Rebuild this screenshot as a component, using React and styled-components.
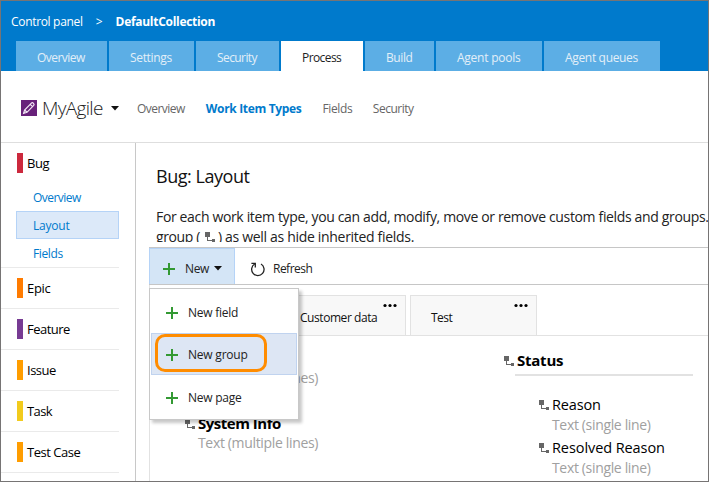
import React from "react";
import styled, { createGlobalStyle } from "styled-components";

const Global = createGlobalStyle`
  * { box-sizing: border-box; }
  body { margin: 0; background: #fff; }
`;

const Window = styled.div`
  width: 709px;
  height: 482px;
  border: 1px solid #767474;
  background: #fff;
  color: #111;
  font: 400 12px/16px "Open Sans", "Noto Sans", sans-serif;
  white-space: nowrap;
  overflow: hidden;
  display: flex;
  flex-direction: column;
`;

const Label = styled.span`
  letter-spacing: ${(p) => p.$track || 0}px;
`;

const Header = styled.header`
  flex: none;
  height: 70px;
  background: #007acc;
  display: flex;
  flex-direction: column;
  justify-content: space-between;
`;

const Breadcrumb = styled.nav`
  display: flex;
  padding: 13px 0 0 10px;
  color: #fff;
`;

const Chevron = styled.span`
  margin: 0 13px;
`;

const Collection = styled.strong`
  font-weight: 700;
  letter-spacing: -0.29px;
`;

const HubTabs = styled.div`
  display: flex;
  gap: 2px;
  padding-left: 15px;
`;

const HubTab = styled.a`
  width: ${(p) => p.$width}px;
  height: 30px;
  padding: 1px 0 0 21px;
  line-height: 32px;
  background: ${(p) => (p.$active ? "#fff" : "#5caee5")};
  color: ${(p) => (p.$active ? "#222" : "#e3eff8")};
`;

const HubRow = styled.div`
  flex: none;
  height: 72px;
  border-bottom: 1px solid #dedede;
  display: flex;
  align-items: center;
  padding: 3px 0 0 20px;
  color: #606060;
`;

const ProcessName = styled.div`
  display: flex;
  align-items: center;
  width: 116px;
  color: #222;
  font-size: 19px;
  font-weight: 300;
  line-height: 24px;

  > span { margin-left: 5px; width: 69px; }
`;

const HubLink = styled.a`
  margin-right: ${(p) => p.$gap}px;
  letter-spacing: ${(p) => p.$track}px;
  color: ${(p) => (p.$active ? "#007acc" : "#666")};
  font-weight: ${(p) => (p.$active ? 700 : 400)};
  padding-top: 1px;
`;

const Body = styled.div`
  flex: 1;
  min-height: 0;
  display: flex;
`;

const Sidebar = styled.aside`
  flex: none;
  width: 135px;
  border-right: 1px solid #c8c8c8;
  padding-right: 16px;
`;

const TypeGroup = styled.section`
  border-bottom: 1px solid #eaeaea;
`;

const TypeRow = styled.div`
  height: 40px;
  display: flex;
  align-items: center;
  padding-left: 16px;
  font-size: 13px;
  color: #000;

  &::before {
    content: "";
    width: 6px;
    height: 20px;
    margin-right: 4px;
    background: ${(p) => p.$color};
  }
`;

const SubItem = styled.a`
  display: block;
  height: 28px;
  margin-left: 15px;
  padding-left: 16px;
  line-height: 27px;
  color: #007acc;
  border: 1px solid ${(p) => (p.$active ? "#b5d3f7" : "transparent")};
  background: ${(p) => (p.$active ? "#dce9f9" : "transparent")};
`;

const Main = styled.main`
  flex: 1;
  min-width: 0;
  display: flex;
  flex-direction: column;
  padding-left: 13px;
  overflow: hidden;
`;

const Title = styled.h1`
  margin: 21px 0 0 7px;
  font-size: 18px;
  font-weight: 400;
  line-height: 24px;
  letter-spacing: -0.46px;
`;

const Description = styled.p`
  margin: 19px 0 5px 7px;
  height: 35px;
  flex: none;
  height: 35px;
  overflow: hidden;
  font-size: 14px;
  line-height: 20px;
  color: #222;

  svg { margin: 0 3px 0 5px; vertical-align: 0; }
`;

const Toolbar = styled.div`
  position: relative;
  flex: none;
  height: 38px;
  border: solid #c6c6c6;
  border-width: 1px 0;
  display: flex;
`;

const NewButton = styled.button`
  width: 86px;
  height: 36px;
  padding: 4px 0 0 13px;
  border: 1px solid #b5d3f7;
  border-bottom: 0;
  background: #d4e5f6;
  color: #222;
  font: inherit;
  display: flex;
  align-items: center;

  span { margin: 0 5px 0 10px; }
`;

const RefreshButton = styled(NewButton)`
  width: 90px;
  padding: 5px 0 0 14px;
  border-color: transparent;
  background: none;

  span { margin-left: 7px; }
`;

const Menu = styled.div`
  position: absolute;
  z-index: 2;
  top: 40px;
  left: 0;
  width: 150px;
  height: 132px;
  padding: 1px;
  border: 1px solid #c8c8c8;
  background: #fff;
  box-shadow: 3px 3px 3px rgba(0, 0, 0, 0.22);
`;

const MenuItem = styled.div`
  position: relative;
  height: ${(p) => (p.$active ? 42 : 43)}px;
  display: flex;
  align-items: center;
  padding: 2px 0 0 14px;
  border: 1px solid ${(p) => (p.$active ? "#c0d3ef" : "transparent")};
  background: ${(p) => (p.$active ? "#dde6f4" : "transparent")};
  color: #222;

  span { margin-left: 10px; }
`;

const Highlight = styled.div`
  position: absolute;
  top: 0;
  left: 3px;
  width: 112px;
  height: 38px;
  border: 3px solid #ff8c00;
  border-radius: 10px;
`;

const Page = styled.div`
  flex: 1;
  border-left: 1px solid #e2e2e2;
`;

const PageTabs = styled.div`
  height: 51px;
  display: flex;
  align-items: flex-end;
  gap: 4px;
  padding-left: 129px;
  border-bottom: 1px solid #e2e2e2;
`;

const PageTab = styled.div`
  width: 127px;
  height: 40px;
  border: 1px solid #e2e2e2;
  border-bottom: 0;
  background: #f8f8f8;
  padding: 7px 8px 0 20px;
  display: flex;
  flex-direction: column;

  svg { align-self: flex-end; }
  span { margin-top: 2px; }
`;

const Columns = styled.div`
  display: grid;
  grid-template-columns: 354px 190px;
  padding-top: 14px;
`;

const LeftColumn = styled.div`
  padding: 18px 0 0 35px;
`;

const Field = styled.div`
  display: grid;
  grid-template-columns: 13px auto;
  align-items: center;
  margin-bottom: ${(p) => p.$gap || 4}px;

  > svg { margin-top: ${(p) => (p.$strong ? 1 : 0)}px; }
`;

const FieldName = styled.div`
  grid-column: 2;
  height: 20px;
  line-height: 20px;
  font-size: ${(p) => (p.$strong ? 15 : 14.5)}px;
  font-weight: ${(p) => (p.$strong ? 700 : 400)};
  letter-spacing: ${(p) => p.$track}px;
  color: #000;
`;

const FieldType = styled.div`
  grid-column: 2;
  height: 19px;
  line-height: 19px;
  font-size: 14px;
  letter-spacing: -0.34px;
  color: #a0a0a0;
`;

const GroupRule = styled.hr`
  width: 178px;
  height: 2px;
  margin: 3px 0 19px 11px;
  border: 0;
  background: #e2e2e2;
`;

const GroupFields = styled.div`
  padding-left: 35px;
`;

const Plus = () => (
  <svg width="12" height="12" viewBox="0 0 12 12">
    <path d="M5 0h2v5h5v2H7v5H5V7H0V5h5z" fill="#339933" />
  </svg>
);

const Caret = () => (
  <svg width="8" height="5" viewBox="0 0 8 5">
    <path d="M0 0h8L4 4.6z" fill="#111" />
  </svg>
);

const Inherited = () => (
  <svg width="10" height="10" viewBox="0 0 10 10" shapeRendering="crispEdges">
    <path d="M0 0h5v5H0zM7 7h3v3H7zM2 5h1v3h4v1H2z" fill="#666" />
  </svg>
);

const Dots = () => (
  <svg width="14" height="5" viewBox="0 0 14 5">
    <circle cx="2" cy="2.5" r="1.6" />
    <circle cx="7" cy="2.5" r="1.6" />
    <circle cx="12" cy="2.5" r="1.6" />
  </svg>
);

const PencilTile = () => (
  <svg width="16" height="16" viewBox="0 0 16 16">
    <path d="M0 0h16v16H0z" fill="#68217a" />
    <path
      d="M2.6 13.4l1-3.4 6.8-6.9c1.3-1.2 3.5 1 2.3 2.3L6 12.3zM3.6 10l2.4 2.3M9.2 4.4l2.3 2.3"
      fill="none"
      stroke="#f3e8f5"
      strokeWidth="1.2"
    />
  </svg>
);

const RefreshIcon = () => (
  <svg width="16" height="16" viewBox="0 0 16 16" fill="none" stroke="#222" strokeWidth="1.3">
    <path d="M11 3a6.2 6.2 0 1 1-6.3 0" />
    <path d="M1.4 2.4h3.9v4" />
  </svg>
);

const hubTabs = [
  ["Overview", 91, -0.53],
  ["Settings", 85, -0.33],
  ["Security", 83, -0.59],
  ["Process", 82, -0.59],
  ["Build", 69, -0.42],
  ["Agent pools", 106, -0.24],
  ["Agent queues", 116, -0.33],
];

const types = [
  ["Epic", "#ff7b00", -0.32],
  ["Feature", "#773b93", -0.53],
  ["Issue", "#ff9d00", -0.5],
  ["Task", "#f2cb1d", -0.6],
  ["Test Case", "#ff9d00", -0.47],
];

export default function App() {
  return (
    <Window>
      <Global />
      <Header>
        <Breadcrumb>
          <Label $track={-0.32}>Control panel</Label>
          <Chevron>&gt;</Chevron>
          <Collection>DefaultCollection</Collection>
        </Breadcrumb>
        <HubTabs>
          {hubTabs.map(([name, width, track]) => (
            <HubTab key={name} $width={width} $active={name === "Process"}>
              <Label $track={track}>{name}</Label>
            </HubTab>
          ))}
        </HubTabs>
      </Header>
      <HubRow>
        <ProcessName>
          <PencilTile />
          <Label $track={-0.67}>MyAgile</Label>
          <Caret />
        </ProcessName>
        <HubLink $track={-0.53} $gap={21}>Overview</HubLink>
        <HubLink $track={-0.33} $gap={21} $active>Work Item Types</HubLink>
        <HubLink $track={-0.37} $gap={20.5}>Fields</HubLink>
        <HubLink $track={-0.5} $gap={0}>Security</HubLink>
      </HubRow>
      <Body>
        <Sidebar>
          <TypeGroup>
            <TypeRow $color="#cc293d"><Label $track={-0.44}>Bug</Label></TypeRow>
            <SubItem><Label $track={-0.53}>Overview</Label></SubItem>
            <SubItem $active><Label $track={-0.2}>Layout</Label></SubItem>
            <SubItem><Label $track={-0.37}>Fields</Label></SubItem>
          </TypeGroup>
          {types.map(([name, color, track]) => (
            <TypeGroup key={name}>
              <TypeRow $color={color}><Label $track={track}>{name}</Label></TypeRow>
            </TypeGroup>
          ))}
        </Sidebar>
        <Main>
          <Title>Bug: Layout</Title>
          <Description>
            <Label $track={-0.35}>
              For each work item type, you can add, modify, move or remove custom fields and groups.
            </Label>
            <br />
            <Label $track={-0.4}>group (</Label>
            <Inherited />
            <Label $track={-0.31}>) as well as hide inherited fields.</Label>
          </Description>
          <Toolbar>
            <NewButton>
              <Plus />
              <Label $track={-0.4}>New</Label>
              <Caret />
            </NewButton>
            <RefreshButton>
              <RefreshIcon />
              <Label $track={-0.51}>Refresh</Label>
            </RefreshButton>
            <Menu>
              <MenuItem><Plus /><Label $track={-0.25}>New field</Label></MenuItem>
              <MenuItem $active>
                <Plus /><Label $track={-0.21}>New group</Label>
                <Highlight />
              </MenuItem>
              <MenuItem><Plus /><Label $track={-0.24}>New page</Label></MenuItem>
            </Menu>
          </Toolbar>
          <Page>
            <PageTabs>
              <PageTab><Dots /><Label $track={-0.44}>Customer data</Label></PageTab>
              <PageTab><Dots /><Label $track={-0.52}>Test</Label></PageTab>
            </PageTabs>
            <Columns>
              <LeftColumn>
                <Field $gap={26}>
                  <FieldType>Text (multiple lines)</FieldType>
                </Field>
                <Field $strong>
                  <Inherited />
                  <FieldName $strong $track={-0.49}>System Info</FieldName>
                  <FieldType>Text (multiple lines)</FieldType>
                </Field>
              </LeftColumn>
              <div>
                <Field $strong>
                  <Inherited />
                  <FieldName $strong $track={-0.24}>Status</FieldName>
                </Field>
                <GroupRule />
                <GroupFields>
                  <Field>
                    <Inherited />
                    <FieldName $track={-0.16}>Reason</FieldName>
                    <FieldType>Text (single line)</FieldType>
                  </Field>
                  <Field>
                    <Inherited />
                    <FieldName $track={-0.08}>Resolved Reason</FieldName>
                    <FieldType>Text (single line)</FieldType>
                  </Field>
                </GroupFields>
              </div>
            </Columns>
          </Page>
        </Main>
      </Body>
    </Window>
  );
}
